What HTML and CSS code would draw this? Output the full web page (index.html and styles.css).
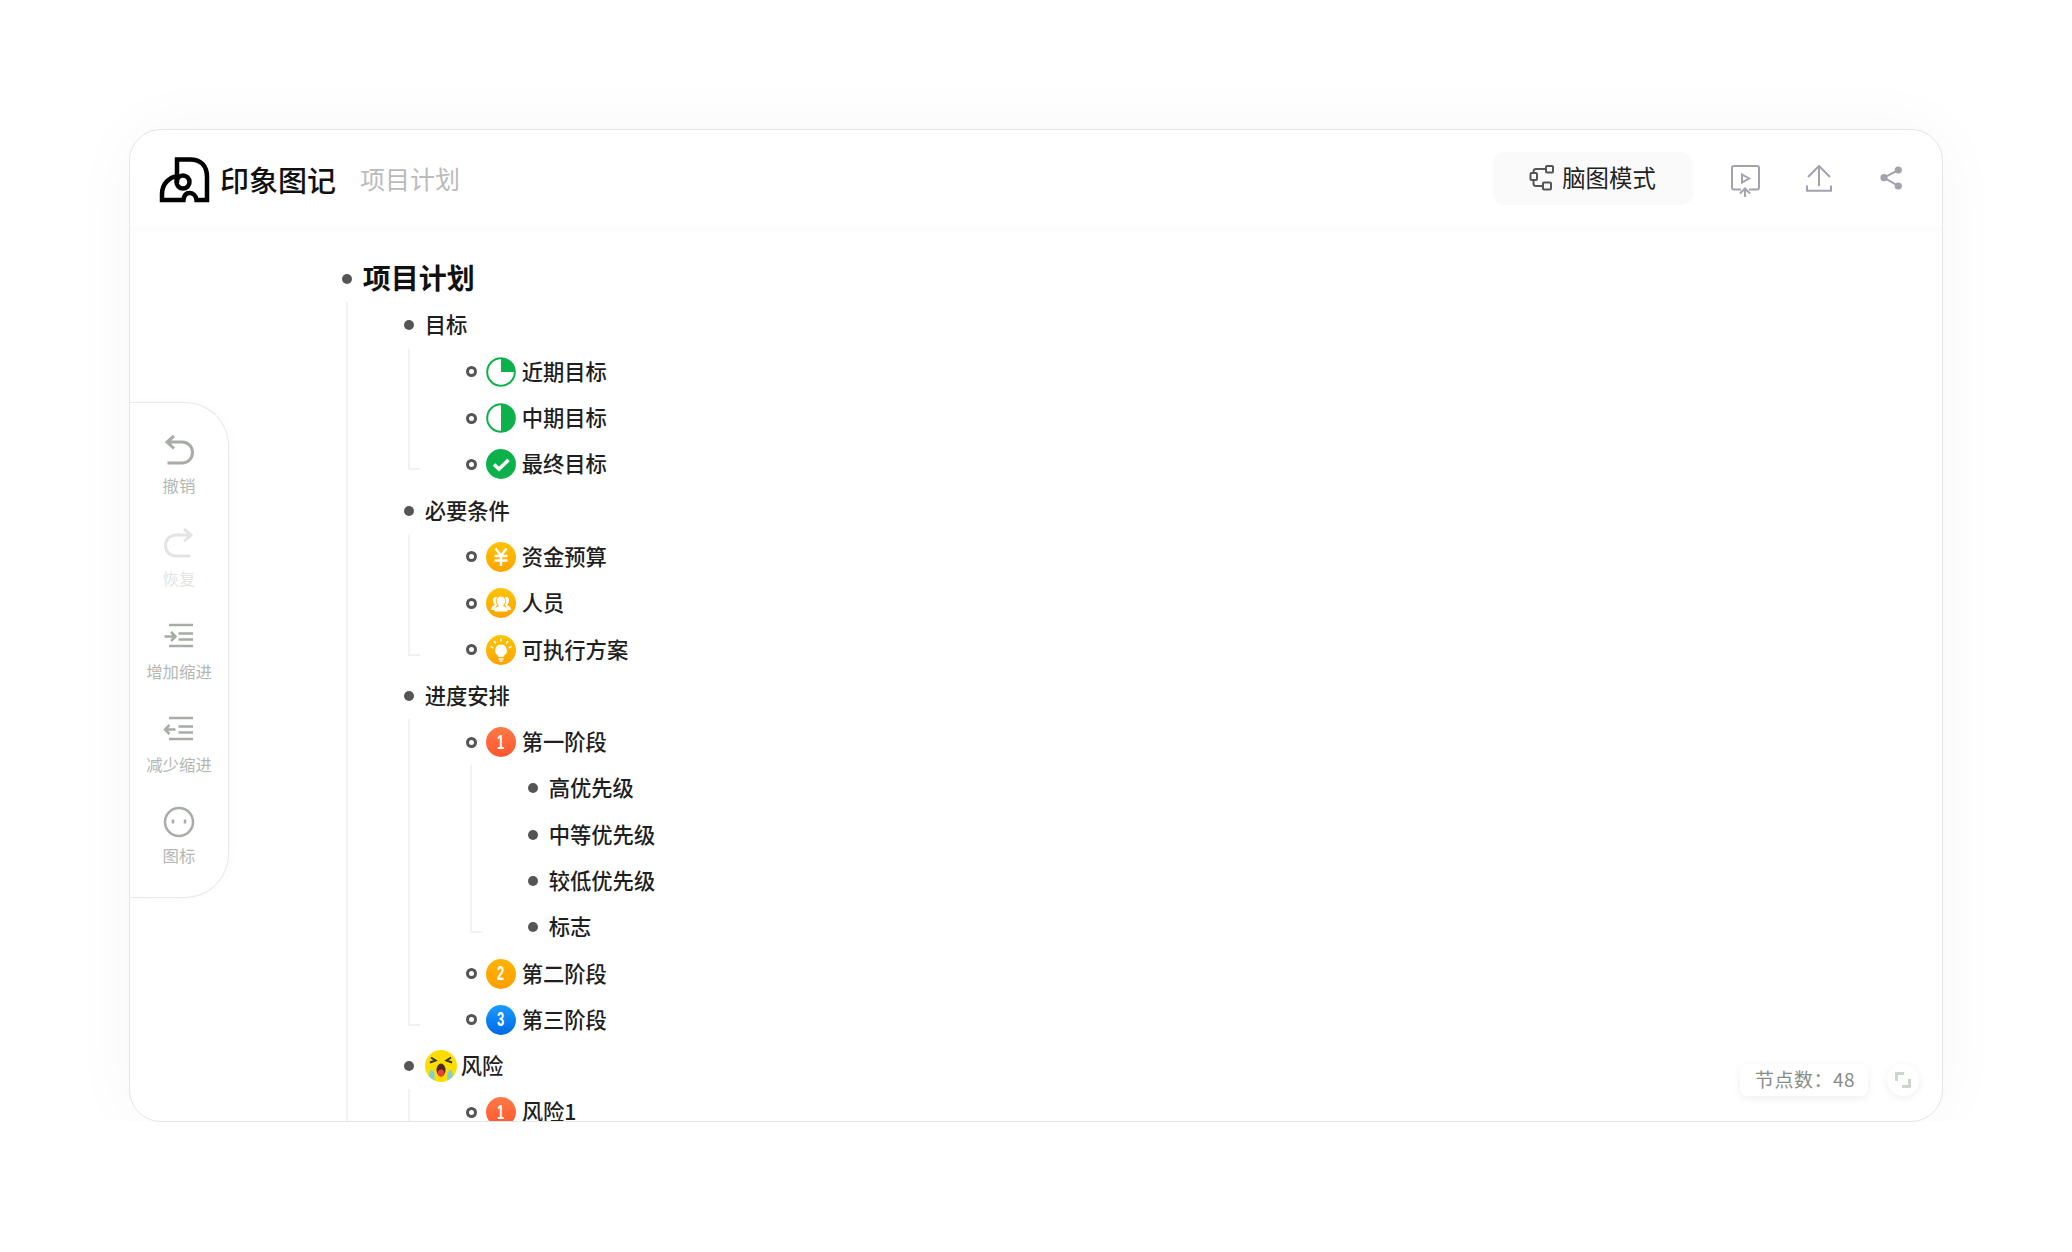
FILE: index.html
```html
<!DOCTYPE html>
<html lang="zh-CN">
<head>
    <meta charset="UTF-8">
    <title>印象图记 - 项目计划</title>
    <link rel="stylesheet" href="styles.css">
</head>
<body>
    <svg class="defs" width="0" height="0">
        <defs>
            <linearGradient id="orange" x1="0" y1="0" x2="0" y2="1">
                <stop offset="0" stop-color="#ffc400"/>
                <stop offset="1" stop-color="#ffa200"/>
            </linearGradient>
            <symbol id="icon-yen" viewBox="0 0 30 30">
                <circle cx="15" cy="15" r="15" fill="url(#orange)"/>
                <path d="M9.500 6.500 15 13.500 20.500 6.500M8.500 14H21.500M8.500 18.500H21.500M15 13.500V24" fill="none" stroke="#fff" stroke-width="2.400"/>
            </symbol>
            <symbol id="icon-people" viewBox="0 0 30 30">
                <circle cx="15" cy="15" r="15" fill="url(#orange)"/>
                <path d="M5 22c0-3 1.500-4 4-5-1.500-1.500-2-3-2-5 0-2 1-3 2.500-3 .6 0 1 .1 1.500.4-.7 1-1 2.200-1 3.600 0 1.600.5 3 1.400 4.200-1.600 1-2.400 2.500-2.400 4.800zM25 22c0-3-1.500-4-4-5 1.500-1.500 2-3 2-5 0-2-1-3-2.500-3-.6 0-1 .1-1.500.4.700 1 1 2.200 1 3.600 0 1.600-.5 3-1.400 4.200 1.600 1 2.400 2.500 2.400 4.800z" fill="#fff"/>
                <path d="M8.500 23.500c0-3.500 2-4.500 4.500-5.500-1.400-1.300-2.200-3.200-2.200-5.200 0-2.600 1.700-4.300 4.200-4.300s4.200 1.700 4.200 4.300c0 2-.8 3.900-2.200 5.200 2.500 1 4.500 2 4.500 5.500z" fill="#fff"/>
            </symbol>
            <symbol id="icon-bulb" viewBox="0 0 30 30">
                <circle cx="15" cy="15" r="15" fill="url(#orange)"/>
                <path d="M15 9.500a6 6 0 0 0-3.500 10.800c.6.5.9 1 .9 1.700h5.200c0-.7.3-1.200.9-1.700A6 6 0 0 0 15 9.500z" fill="#fff"/>
                <path d="M12.500 24h5M13.500 26h3M15 3.500v3M8 6l1.700 2.500M22 6l-1.700 2.500M4.500 11.500l2.800 1.200M25.500 11.500l-2.800 1.200" fill="none" stroke="#fff" stroke-width="1.500"/>
            </symbol>
            <symbol id="icon-quarter" viewBox="0 0 30 30">
                <circle cx="15" cy="15" r="13.800" fill="#fff" stroke="#0cb14b" stroke-width="2"/>
                <path d="M15 1.500a13.500 13.500 0 0 1 13.500 13.500H15z" fill="#0cb14b"/>
            </symbol>
            <symbol id="icon-half" viewBox="0 0 30 30">
                <circle cx="15" cy="15" r="13.800" fill="#fff" stroke="#0cb14b" stroke-width="2"/>
                <path d="M15 1.500a13.500 13.500 0 0 1 0 27z" fill="#0cb14b"/>
            </symbol>
            <symbol id="icon-check" viewBox="0 0 30 30">
                <circle cx="15" cy="15" r="15" fill="#0cb14b"/>
                <path d="M8 15.500 13 20 22.500 11" fill="none" stroke="#fff" stroke-width="3.600"/>
            </symbol>
            <symbol id="icon-cry" viewBox="0 0 32 32">
                <circle cx="16" cy="16" r="16" fill="#ffdd00"/>
                <path d="M5.500 20C7 20 9.500 21 9.500 24V30A16 16 0 0 1 4 26.500zM26.500 20C25 20 22.500 21 22.500 24V30A16 16 0 0 0 28 26.500z" fill="#7cd0d8"/>
                <path d="M5 12.500 10.500 10.500 6 7.500M27 12.500 21.500 10.500 26 7.500" fill="none" stroke="#333" stroke-width="2"/>
                <ellipse cx="16" cy="20" rx="4.500" ry="6.500" fill="#4a2a20"/>
                <ellipse cx="16" cy="23" rx="3.200" ry="3.500" fill="#f03e3e"/>
            </symbol>
        </defs>
    </svg>

    <div class="card">
        <header class="header">
            <svg class="logo" viewBox="150 150 66 60" width="66" height="60">
                <g transform="translate(150 150)" fill="none" stroke="#000" stroke-width="4.500">
                    <path d="M26 33V9.500H39C50 9.500 56 16 56 27V50H45.500C45 45 41.500 43 38.500 43 35 43 33 45 32.500 50H11V44C11 34 18 27 27 26"/>
                    <circle cx="32" cy="32" r="6.500"/>
                </g>
            </svg>
            <span class="brand">印象图记</span>
            <span class="doc-title">项目计划</span>
            <div class="actions">
                <button class="mode-btn">
                    <svg viewBox="0 0 30 30" width="30" height="30" fill="none" stroke="#555" stroke-width="2">
                        <rect x="4.500" y="9" width="6.500" height="7" rx="1"/>
                        <rect x="20" y="2" width="7" height="6.500" rx="1"/>
                        <rect x="17" y="18.500" width="8" height="7" rx="1"/>
                        <path d="M7.500 9V7.500C7.500 6 8.500 5 10 5H20M7.500 16V19.500C7.500 21 8.500 22 10 22H17"/>
                    </svg>
                    脑图模式
                </button>
                <svg class="present" viewBox="0 0 32 36" width="32" height="36" fill="none" stroke="#a3a2ae" stroke-width="2">
                    <path d="M12 26.500H5A2 2 0 0 1 3 24.500V5A2 2 0 0 1 5 3H28A2 2 0 0 1 30 5V24.500A2 2 0 0 1 28 26.500H20"/>
                    <path d="M13 11.500 20 15.500 13 19.500z"/>
                    <path d="M16 34V25.500M11 30.500 16 25.500 21 30.500"/>
                </svg>
                <svg viewBox="0 0 32 32" width="32" height="32" fill="none" stroke="#a3a2ae" stroke-width="2">
                    <path d="M16 4V24M5 15 16 4 27 15"/>
                    <path d="M4 23.500V28.700H28V23.500"/>
                </svg>
                <svg viewBox="0 0 30 30" width="30" height="30" fill="#a3a2ae" stroke="#a3a2ae" stroke-width="2">
                    <path d="M21.300 7 7 14.700 21.300 23" fill="none"/>
                    <circle cx="21.300" cy="7" r="2.600"/>
                    <circle cx="7" cy="14.700" r="2.600"/>
                    <circle cx="21.300" cy="23" r="2.600"/>
                </svg>
            </div>
        </header>

        <div class="main">
            <aside class="sidebar">
                <div class="tool">
                    <svg viewBox="0 0 36 36" width="36" height="36" fill="none" stroke="currentColor" stroke-width="3">
                        <path d="M13 4 6 10 13 16.500M6 10H21C27 10 31.500 14.500 31.500 20.500 31.500 26.500 27 31 21 31H6.500"/>
                    </svg>
                    <span>撤销</span>
                </div>
                <div class="tool disabled">
                    <svg viewBox="0 0 36 36" width="36" height="36" fill="none" stroke="currentColor" stroke-width="3">
                        <path d="M23 4 30 10 23 16.500M30 10H15C9 10 4.500 14.500 4.500 20.500 4.500 26.500 9 31 15 31H29.500"/>
                    </svg>
                    <span>恢复</span>
                </div>
                <div class="tool">
                    <svg viewBox="0 0 36 36" width="36" height="36" fill="none" stroke="currentColor" stroke-width="2.500">
                        <path d="M8 7H32M17.500 15.500H32M17.500 21.500H32M8 28H32M3.500 18.500H14M10 14 14.500 18.500 10 23"/>
                    </svg>
                    <span>增加缩进</span>
                </div>
                <div class="tool">
                    <svg viewBox="0 0 36 36" width="36" height="36" fill="none" stroke="currentColor" stroke-width="2.500">
                        <path d="M8 7H32M17.500 15.500H32M17.500 21.500H32M8 28H32M4 18.500H14.500M8.500 14 4 18.500 8.500 23"/>
                    </svg>
                    <span>减少缩进</span>
                </div>
                <div class="tool">
                    <svg viewBox="0 0 36 36" width="36" height="36" fill="none" stroke="currentColor" stroke-width="2.500">
                        <circle cx="18" cy="18" r="14"/>
                        <path d="M12 15.500V19.500M24 15.500V19.500"/>
                    </svg>
                    <span>图标</span>
                </div>
            </aside>

            <div class="tree">
                <div class="row root"><i class="dot"></i>项目计划</div>
                <ul class="children">
                    <li>
                        <div class="row"><i class="dot"></i>目标</div>
                        <ul class="children">
                            <li class="row"><i class="dot hollow"></i><svg class="mark"><use href="#icon-quarter"/></svg>近期目标</li>
                            <li class="row"><i class="dot hollow"></i><svg class="mark"><use href="#icon-half"/></svg>中期目标</li>
                            <li class="row"><i class="dot hollow"></i><svg class="mark"><use href="#icon-check"/></svg>最终目标</li>
                        </ul>
                    </li>
                    <li>
                        <div class="row"><i class="dot"></i>必要条件</div>
                        <ul class="children">
                            <li class="row"><i class="dot hollow"></i><svg class="mark"><use href="#icon-yen"/></svg>资金预算</li>
                            <li class="row"><i class="dot hollow"></i><svg class="mark"><use href="#icon-people"/></svg>人员</li>
                            <li class="row"><i class="dot hollow"></i><svg class="mark"><use href="#icon-bulb"/></svg>可执行方案</li>
                        </ul>
                    </li>
                    <li>
                        <div class="row"><i class="dot"></i>进度安排</div>
                        <ul class="children">
                            <li>
                                <div class="row"><i class="dot hollow"></i><span class="badge red"><b>1</b></span>第一阶段</div>
                                <ul class="children">
                                    <li class="row"><i class="dot"></i>高优先级</li>
                                    <li class="row"><i class="dot"></i>中等优先级</li>
                                    <li class="row"><i class="dot"></i>较低优先级</li>
                                    <li class="row"><i class="dot"></i>标志</li>
                                </ul>
                            </li>
                            <li class="row"><i class="dot hollow"></i><span class="badge amber"><b>2</b></span>第二阶段</li>
                            <li class="row"><i class="dot hollow"></i><span class="badge blue"><b>3</b></span>第三阶段</li>
                        </ul>
                    </li>
                    <li>
                        <div class="row"><i class="dot"></i><svg class="mark face"><use href="#icon-cry"/></svg>风险</div>
                        <ul class="children open">
                            <li class="row"><i class="dot hollow"></i><span class="badge red"><b>1</b></span>风险1</li>
                        </ul>
                    </li>
                </ul>
            </div>
        </div>

        <div class="footer-tools">
            <div class="count">节点数：48</div>
            <div class="fit">
                <svg viewBox="0 0 16 16" width="16" height="16" fill="none" stroke="#ccd6cc" stroke-width="3">
                    <path d="M1.500 9V1.500H9M14.500 7V14.500H7"/>
                </svg>
            </div>
        </div>
    </div>
</body>
</html>
```

FILE: styles.css
```css
body {
    margin: 0;
    background-color: #fff;
    font-family: "Noto Sans CJK SC", "Noto Sans", sans-serif;
    color: #1f1f1f;
}
.defs {
    position: absolute;
}
.card {
    position: relative;
    box-sizing: border-box;
    display: flex;
    flex-direction: column;
    width: 1814px;
    height: 993px;
    margin: 129px 0 0 129px;
    background-color: #fff;
    border: 1px solid #e3e7e6;
    border-radius: 32px;
    box-shadow: 0 0 70px rgba(0, 0, 0, 0.035);
    overflow: hidden;
}
.header {
    display: flex;
    align-items: center;
    flex-shrink: 0;
    height: 96px;
    padding: 0 35px 0 21px;
    border-bottom: 6px solid #fcfcfc;
}
.logo {
    margin-top: 3px;
}
.brand {
    margin: 1px 0 0 3px;
    font-size: 29px;
    font-weight: 500;
    color: #111;
}
.doc-title {
    margin: 0 0 0 24px;
    font-size: 25px;
    color: #bbb;
}
.actions {
    display: flex;
    align-items: center;
    gap: 42px;
    margin-left: auto;
}
.mode-btn {
    box-sizing: border-box;
    display: flex;
    align-items: center;
    justify-content: center;
    gap: 6px;
    width: 200px;
    height: 53px;
    margin-right: -6px;
    padding: 0 4px 3px 0;
    border: none;
    border-radius: 12px;
    background-color: #fafafa;
    font-family: inherit;
    font-size: 23.4px;
    color: #222;
}
.mode-btn svg {
    margin-top: 5px;
}
.present {
    margin-top: 5px;
}
.main {
    display: flex;
    flex: 1;
    min-height: 0;
}
.sidebar {
    box-sizing: border-box;
    display: flex;
    flex-direction: column;
    flex-shrink: 0;
    gap: 29px;
    align-self: flex-start;
    width: 99px;
    height: 496px;
    margin-top: 170px;
    padding-top: 29px;
    border: 1px solid #e8e8e8;
    border-left: none;
    border-radius: 0 44px 44px 0;
    box-shadow: 2px 0 12px rgba(0, 0, 0, 0.02);
    background-color: #fff;
}
.tool {
    display: flex;
    flex-direction: column;
    align-items: center;
    gap: 6px;
    color: #a7aca6;
}
.tool:last-child {
    gap: 4px;
}
.tool span {
    font-size: 16.4px;
    line-height: 22px;
    color: #b4b8b4;
}
.tool.disabled, .tool.disabled span {
    color: #e3e5e3;
}
.tree {
    flex: 1;
    padding: 24px 0 0 113px;
}
ul {
    margin: 0;
    padding: 0;
    list-style: none;
}
.row {
    box-sizing: border-box;
    display: flex;
    align-items: center;
    height: 46.3px;
    padding-bottom: 3px;
    font-size: 21.3px;
    font-weight: 500;
    white-space: nowrap;
}
.root {
    padding-bottom: 5px;
    font-size: 28px;
    font-weight: 700;
    color: #111;
}
.dot {
    flex-shrink: 0;
    box-sizing: border-box;
    width: 10px;
    height: 10px;
    margin: 3px 10.7px 0 0;
    border-radius: 50%;
    background-color: #555;
}
.root .dot {
    margin-top: 5px;
}
.dot.hollow {
    width: 11px;
    height: 11px;
    margin-right: 9px;
    border: 3px solid #555;
    background-color: #fff;
}
.children {
    position: relative;
    padding-left: 62px;
}
.children.open {
    padding-bottom: 40px;
}
.children::before {
    content: "";
    position: absolute;
    top: 0;
    bottom: 17px;
    left: 4px;
    width: 10px;
    border-left: 2px solid #f2f2f2;
    border-bottom: 2px solid #f2f2f2;
}
.mark {
    flex-shrink: 0;
    width: 30px;
    height: 30px;
    margin: 3px 5.7px 0 0;
}
.mark.face {
    width: 32px;
    height: 32px;
    margin-right: 4px;
}
.badge {
    display: flex;
    align-items: center;
    justify-content: center;
    flex-shrink: 0;
    width: 30px;
    height: 30px;
    margin: 3px 5.7px 0 0;
    border-radius: 50%;
    color: #fff;
}
.badge b {
    display: inline-block;
    font-family: "Liberation Sans", sans-serif;
    font-size: 20px;
    font-weight: 700;
    transform: scaleX(0.65);
}
.red {
    background: linear-gradient(#ff7a45, #ff5530);
}
.amber {
    background: linear-gradient(#ffb300, #ff9f00);
}
.blue {
    background: linear-gradient(#1a9cff, #0068e6);
}
.footer-tools {
    position: absolute;
    right: 23px;
    bottom: 25px;
    display: flex;
    align-items: center;
    gap: 19px;
}
.count {
    box-sizing: border-box;
    width: 128px;
    height: 32px;
    padding-left: 15px;
    border-radius: 8px;
    background-color: #fff;
    box-shadow: 0 2px 8px rgba(0, 0, 0, 0.07);
    font-size: 19px;
    letter-spacing: 0.5px;
    line-height: 30px;
    color: #878c87;
    white-space: nowrap;
}
.fit {
    display: flex;
    align-items: center;
    justify-content: center;
    width: 32px;
    height: 32px;
    border-radius: 50%;
    background-color: #fff;
    box-shadow: 0 2px 8px rgba(0, 0, 0, 0.07);
}
```
